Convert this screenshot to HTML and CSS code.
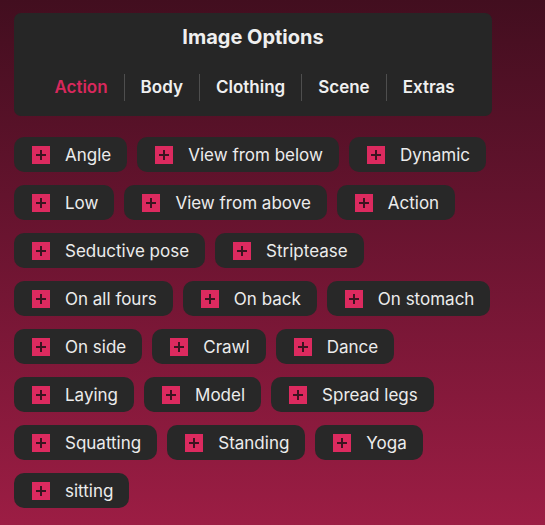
FILE: index.html
```html
<!DOCTYPE html>
<html>
<head>
<meta charset="utf-8">
<link rel="stylesheet" href="styles.css">
</head>
<body>
<div class="wrap">
  <div class="panel">
    <div class="title">Image Options</div>
    <div class="tabs">
      <span class="tab active">Action</span>
      <span class="tab">Body</span>
      <span class="tab">Clothing</span>
      <span class="tab">Scene</span>
      <span class="tab">Extras</span>
    </div>
  </div>
  <div class="chips">
    <div class="chip"><span class="plus"></span><span>Angle</span></div>
    <div class="chip"><span class="plus"></span><span>View from below</span></div>
    <div class="chip"><span class="plus"></span><span>Dynamic</span></div>
    <div class="chip"><span class="plus"></span><span>Low</span></div>
    <div class="chip"><span class="plus"></span><span>View from above</span></div>
    <div class="chip"><span class="plus"></span><span>Action</span></div>
    <div class="chip"><span class="plus"></span><span>Seductive pose</span></div>
    <div class="chip"><span class="plus"></span><span>Striptease</span></div>
    <div class="chip"><span class="plus"></span><span>On all fours</span></div>
    <div class="chip"><span class="plus"></span><span>On back</span></div>
    <div class="chip"><span class="plus"></span><span>On stomach</span></div>
    <div class="chip"><span class="plus"></span><span>On side</span></div>
    <div class="chip"><span class="plus"></span><span>Crawl</span></div>
    <div class="chip"><span class="plus"></span><span>Dance</span></div>
    <div class="chip"><span class="plus"></span><span>Laying</span></div>
    <div class="chip"><span class="plus"></span><span>Model</span></div>
    <div class="chip"><span class="plus"></span><span>Spread legs</span></div>
    <div class="chip"><span class="plus"></span><span>Squatting</span></div>
    <div class="chip"><span class="plus"></span><span>Standing</span></div>
    <div class="chip"><span class="plus"></span><span>Yoga</span></div>
    <div class="chip"><span class="plus"></span><span>sitting</span></div>
  </div>
</div>
</body>
</html>
```

FILE: styles.css
```css
html, body {
  margin: 0;
  padding: 0;
}
body {
  width: 545px;
  height: 525px;
  overflow: hidden;
  background: linear-gradient(to bottom, #420e1f 0%, #6a1430 45%, #9c1d44 100%);
  font-family: Inter, "Noto Sans", sans-serif;
  color: #ececec;
}
.wrap {
  width: 478px;
  padding: 13px 14px 0;
}
.panel {
  background: #262626;
  border-radius: 7px;
  height: 103px;
  box-sizing: border-box;
  padding-top: 11px;
  display: flex;
  flex-direction: column;
  align-items: center;
}
.title {
  font-size: 20px;
  font-weight: 700;
  line-height: 26px;
  color: #efefef;
}
.tabs {
  display: flex;
  margin-top: 24px;
  margin-left: 3px;
}
.tab {
  font-size: 17px;
  font-weight: 600;
  line-height: 27px;
  padding: 0 16px;
  border-left: 1px solid #4e4e4e;
  color: #efefef;
}
.tab:first-child {
  border-left: none;
}
.tab.active {
  color: #d8285c;
}
.chips {
  display: flex;
  flex-wrap: wrap;
  gap: 13px 10px;
  margin-top: 21px;
}
.chip {
  display: flex;
  align-items: center;
  height: 35px;
  box-sizing: border-box;
  padding: 0 16px 0 18px;
  gap: 15px;
  background: #282828;
  border-radius: 10px;
  font-size: 17px;
  line-height: 20px;
  color: #ececec;
}
.plus {
  position: relative;
  width: 18px;
  height: 18px;
  background: #dc2a5f;
  flex: none;
}
.plus::before,
.plus::after {
  content: "";
  position: absolute;
  background: #3a1420;
}
.plus::before {
  left: 4px;
  right: 4px;
  top: 8px;
  height: 2px;
}
.plus::after {
  top: 4px;
  bottom: 4px;
  left: 8px;
  width: 2px;
}
```
